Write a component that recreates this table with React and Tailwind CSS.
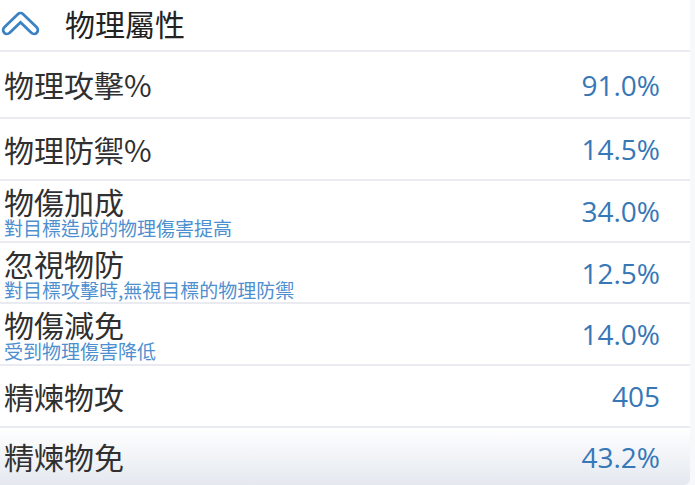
import React from 'react';

const rows = [
  { label: '物理攻擊%', value: '91.0%', h: 'h-[67px]' },
  { label: '物理防禦%', value: '14.5%' },
  { label: '物傷加成', sub: '對目標造成的物理傷害提高', value: '34.0%' },
  { label: '忽視物防', sub: '對目標攻擊時,無視目標的物理防禦', value: '12.5%', h: 'h-[61px]' },
  { label: '物傷減免', sub: '受到物理傷害降低', value: '14.0%' },
  { label: '精煉物攻', value: '405' },
];

const ChevronUp = () => (
  <svg width="40" height="40" viewBox="0 0 40 40" className="shrink-0">
    <polyline points="6,27 19.5,14 33,27" fill="none" stroke="#3b82c4" strokeWidth="10.5" strokeLinecap="round" strokeLinejoin="round" />
    <polyline points="6,27 19.5,14 33,27" fill="none" stroke="#ffffff" strokeWidth="5" strokeLinecap="round" strokeLinejoin="round" />
  </svg>
);

const cjk = "font-['Noto_Sans_CJK_TC','Noto_Sans',sans-serif]";

const Row = ({ label, sub, value, h = 'h-[62px]' }) => (
  <div className={`${h} flex items-center justify-between pl-[4px] pr-[30px] border-b-2 border-[#e9ebf0]`}>
    <div className="flex flex-col">
      <span className={`${cjk} text-[30px] leading-[33px] text-[#303030]`}>{label}</span>
      {sub && (
        <span className={`${cjk} text-[19px] leading-[19px] text-[#4d8fcf]`}>{sub}</span>
      )}
    </div>
    <span className="font-['Open_Sans',sans-serif] text-[28px] text-[#3677b8]">{value}</span>
  </div>
);

export default function App() {
  return (
    <div className="w-[695px] h-[485px] bg-[#f7f8fa] overflow-hidden">
      <div className="w-[690px] h-[485px] bg-white flex flex-col rounded-br-[6px]">
        <div className="h-[52px] flex items-center gap-[24px] border-b-2 border-[#e9ebf0] pl-[1px] pb-[4px]">
          <ChevronUp />
          <span className={`${cjk} text-[30px] text-[#222222]`}>物理屬性</span>
        </div>
        {rows.map((r) => (
          <Row key={r.label} {...r} />
        ))}
        <div className="flex-1 flex items-center justify-between pl-[4px] pr-[30px] bg-gradient-to-b from-white to-[#e4e8ef] rounded-br-[6px]">
          <span className={`${cjk} text-[30px] leading-[33px] text-[#303030]`}>精煉物免</span>
          <span className="font-['Open_Sans',sans-serif] text-[28px] text-[#3677b8]">43.2%</span>
        </div>
      </div>
    </div>
  );
}
